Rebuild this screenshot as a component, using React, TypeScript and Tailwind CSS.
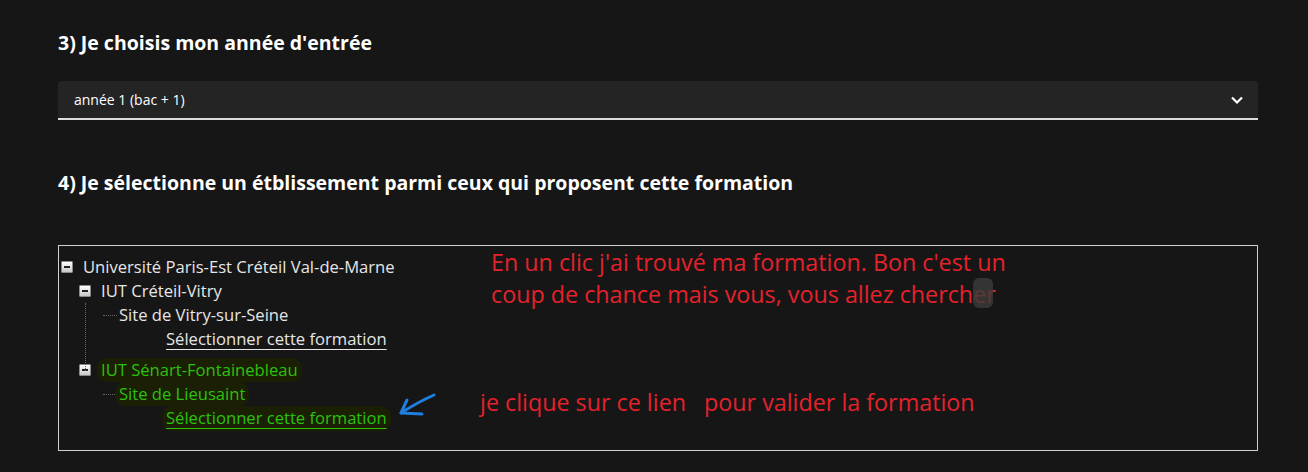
import React from "react";

const Minus = () => (
  <span className="inline-flex h-[12px] w-[12px] shrink-0 items-center justify-center rounded-[1px] border border-[#8a8a8a] bg-gradient-to-b from-[#ffffff] to-[#c8c8c8]">
    <span className="block h-[2px] w-[6px] bg-[#222]" />
  </span>
);

const red = "text-[23.3px] leading-[32px] text-[#e3222c]";

export default function App() {
  return (
    <div
      className="min-h-[472px] w-[1308px] bg-[#161616] pl-[58px] pr-[50px] pt-[30px] text-white"
      style={{ fontFamily: "'Open Sans', sans-serif" }}
    >
      <h2 className="text-[19.5px] font-bold leading-[26px]">3) Je choisis mon année d'entrée</h2>

      <div className="mt-[25px] flex h-[39px] items-center justify-between rounded-t-[4px] border-b-2 border-[#dcdcdc] bg-[#242424] pl-[16px] pr-[14px]">
        <span className="text-[14px]">année 1 (bac + 1)</span>
        <svg width="14" height="10" viewBox="0 0 14 10" fill="none">
          <path d="M2 2.5 L7 7.5 L12 2.5" stroke="white" strokeWidth="2.2" />
        </svg>
      </div>

      <h2 className="mt-[50px] text-[19.5px] font-bold leading-[26px]">
        4) Je sélectionne un étblissement parmi ceux qui proposent cette formation
      </h2>

      <div className="relative mt-[49px] h-[206px] border border-[#cfcfcf] pl-[2px] pt-[9px] text-[16.6px] text-[#e6e6e6]">
        <div className="flex h-[24px] items-center">
          <Minus />
          <span className="ml-[10px]">Université Paris-Est Créteil Val-de-Marne</span>
        </div>
        <div className="relative ml-[18px]">
          <div className="absolute left-[6px] top-[24px] h-[68px] border-l border-dotted border-[#666]" />
          <div className="flex h-[24px] items-center">
            <Minus />
            <span className="ml-[10px]">IUT Créteil-Vitry</span>
          </div>
          <div className="flex h-[24px] items-center pl-[24px]">
            <span className="w-[14px] border-t border-dotted border-[#666]" />
            <span className="pl-[2px]">Site de Vitry-sur-Seine</span>
          </div>
          <div className="flex h-[24px] items-center pl-[87px]">
            <span className="underline decoration-1 underline-offset-[4px]">Sélectionner cette formation</span>
          </div>
          <div className="mt-[7px] flex h-[24px] items-center">
            <Minus />
            <span className="ml-[6px] rounded-[10px] bg-[#1b1f03] px-[4px] text-[#2bc20e]">IUT Sénart-Fontainebleau</span>
          </div>
          <div className="flex h-[24px] items-center pl-[24px]">
            <span className="w-[12px] border-t border-dotted border-[#666]" />
            <span className="rounded-[10px] bg-[#1b1f03] px-[4px] text-[#2bc20e]">Site de Lieusaint</span>
          </div>
          <div className="flex h-[25px] items-center pl-[83px]">
            <span className="rounded-[10px] bg-[#1b1f03] px-[4px] text-[#2bc20e] underline decoration-1 underline-offset-[4px]">
              Sélectionner cette formation
            </span>
          </div>
        </div>

        <div className={`absolute left-[432px] top-0 ${red}`}>
          <div>En un clic j'ai trouvé ma formation. Bon c'est un</div>
          <div>coup de chance mais vous, vous allez chercher</div>
        </div>
        <div className="absolute left-[914px] top-[32px] h-[30px] w-[20px] rounded-[6px] bg-[#3c3c3c] opacity-80" />
        <div className={`absolute left-[421px] top-[140px] ${red}`}>je clique sur ce lien</div>
        <div className={`absolute left-[645px] top-[140px] ${red}`}>pour valider la formation</div>
        <svg className="absolute left-[336px] top-[144px]" width="44" height="28" viewBox="0 0 44 28" fill="none">
          <path d="M39 5 C 30 9, 20 14, 6 23" stroke="#1f7fe0" strokeWidth="3" strokeLinecap="round" />
          <path d="M12 10 L 6 23 L 27 24" stroke="#1f7fe0" strokeWidth="3" strokeLinecap="round" strokeLinejoin="round" />
        </svg>
      </div>
    </div>
  );
}
